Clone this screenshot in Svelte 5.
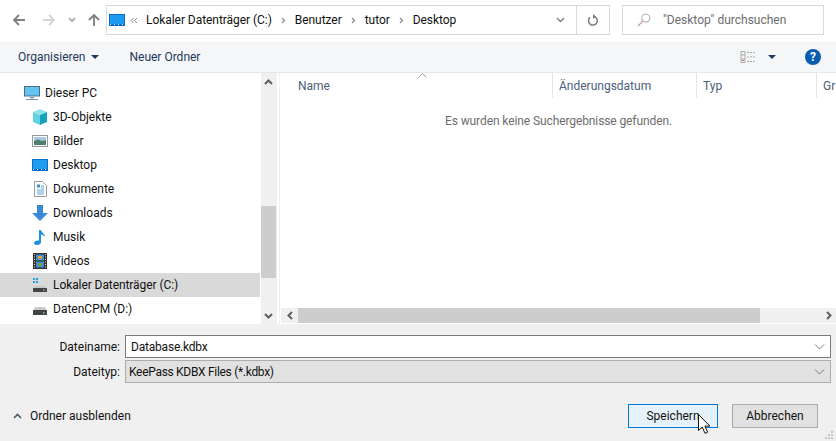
<script lang="ts">
	// Save-as dialog body: nav bar, command bar, tree + list, file fields, buttons.
	const tree = [
		{ label: 'Dieser PC', icon: 'pc', top: true },
		{ label: '3D-Objekte', icon: 'cube' },
		{ label: 'Bilder', icon: 'pics' },
		{ label: 'Desktop', icon: 'desk' },
		{ label: 'Dokumente', icon: 'docs' },
		{ label: 'Downloads', icon: 'down' },
		{ label: 'Musik', icon: 'music' },
		{ label: 'Videos', icon: 'video' },
		{ label: 'Lokaler Datenträger (C:)', icon: 'sys', selected: true },
		{ label: 'DatenCPM (D:)', icon: 'disk' }
	];
	const crumbs = ['Lokaler Datenträger (C:)', 'Benutzer', 'tutor', 'Desktop'];
	const columns = [
		{ label: 'Name', width: 255 },
		{ label: 'Änderungsdatum', width: 144 },
		{ label: 'Typ', width: 120 },
		{ label: 'Gr', width: 20 }
	];
</script>

<div class="dialog">
	<nav class="navbar">
		<button class="nav-btn back" aria-label="Zurück">
			<svg width="14" height="14" viewBox="0 0 14 14"><path d="M13 7H2M7 2 2 7l5 5" fill="none" stroke="#7f7f7f" stroke-width="1.8" /></svg>
		</button>
		<button class="nav-btn fwd" aria-label="Vor">
			<svg width="14" height="14" viewBox="0 0 14 14"><path d="M1 7h11M7 2l5 5-5 5" fill="none" stroke="#d4d4d4" stroke-width="1.8" /></svg>
		</button>
		<button class="nav-small" aria-label="Verlauf">
			<svg width="8" height="6" viewBox="0 0 8 6"><path d="M1 1l3 3 3-3" fill="none" stroke="#a3a3a3" stroke-width="1.6" /></svg>
		</button>
		<button class="nav-btn up" aria-label="Nach oben">
			<svg width="14" height="14" viewBox="0 0 14 14"><path d="M7 13V2M2 7l5-5 5 5" fill="none" stroke="#7f7f7f" stroke-width="1.8" /></svg>
		</button>
		<div class="address">
			<svg class="addr-icon" width="16" height="12" viewBox="0 0 16 12">
				<rect width="16" height="12" fill="#0a6fc9" />
				<rect x="1" y="1" width="14" height="9" fill="#1e9bf0" />
				<path d="M1 10.5h14" stroke="#cfe8fb" stroke-dasharray="1 3" />
			</svg>
			<span class="overflow">
				<svg width="8" height="7" viewBox="0 0 8 7"><path d="M3.5 1 1 3.500 3.5 6M7 1 4.500 3.500 7 6" fill="none" stroke="#8d8d8d" /></svg>
			</span>
			{#each crumbs as crumb, i}
				{#if i > 0}
					<svg class="sep" width="5" height="7" viewBox="0 0 5 7"><path d="M1 1l2.500 2.500L1 6" fill="none" stroke="#8d8d8d" stroke-width="1.3" /></svg>
				{/if}
				<span class="crumb">{crumb}</span>
			{/each}
			<span class="spacer"></span>
			<span class="addr-drop">
				<svg width="9" height="6" viewBox="0 0 9 6"><path d="M1 1l3.500 3.500L8 1" fill="none" stroke="#7a7a7a" stroke-width="1.3" /></svg>
			</span>
			<span class="addr-refresh">
				<svg width="12" height="13" viewBox="0 0 12 13"><path d="M7.500 2.600A4.400 4.400 0 1 1 3 3.400" fill="none" stroke="#7a7a7a" stroke-width="1.5" /><path d="M6 0v5l3-2.500z" fill="#7a7a7a" /></svg>
			</span>
		</div>
		<div class="search">
			<svg width="14" height="14" viewBox="0 0 14 14"><circle cx="8.800" cy="5.200" r="4" fill="none" stroke="#a8a8a8" /><path d="M5.800 8.200 1 13" stroke="#c49a8c" stroke-width="1.2" /></svg>
			<span>"Desktop" durchsuchen</span>
		</div>
	</nav>

	<div class="commandbar">
		<span class="cmd organise">Organisieren<i class="caret"></i></span>
		<span class="cmd">Neuer Ordner</span>
		<span class="spacer"></span>
		<svg class="views" width="17" height="12" viewBox="0 0 17 12">
			<path d="M1 .5h4v11H1zM1 4h4M1 8h4" fill="none" stroke="#a8a8a8" />
			<path d="M7 1.500h9M7 6h9M7 10.500h9" stroke="#a8a8a8" stroke-dasharray="2 1" />
			<path d="M2 9.500h2" stroke="#d66" />
		</svg>
		<i class="caret views-caret"></i>
		<span class="help">?</span>
	</div>

	<div class="panes">
		<aside class="tree">
			<ul>
				{#each tree as item}
					<li class:selected={item.selected} class:top={item.top}>
						<span class="tree-icon">
							{#if item.icon === 'pc'}
								<svg width="16" height="16" viewBox="0 0 16 16"><rect x="0" y="1" width="16" height="10.500" fill="#4f6e86" /><rect x="1" y="2" width="14" height="8.500" fill="#63c3f2" /><path d="M6 12h4v1.500H6z" fill="#8aa0ae" /><path d="M2 14.500h12" stroke="#7d94a3" /></svg>
							{:else if item.icon === 'cube'}
								<svg width="16" height="16" viewBox="0 0 16 16"><path d="M8 0l7 3-7 3-7-3z" fill="#8fe3ec" /><path d="M1 3l7 3v10l-7-3z" fill="#62d3e3" /><path d="M15 3 8 6v10l7-3z" fill="#14a5bd" /></svg>
							{:else if item.icon === 'pics'}
								<svg width="16" height="14" viewBox="0 0 16 14"><rect x=".5" y="1.500" width="15" height="11" fill="#fff" stroke="#9a9a9a" /><rect x="2" y="3" width="12" height="4" fill="#a9c9de" /><path d="M2 7l4-1.500L10 7l4-1v5H2z" fill="#4f7f6f" /></svg>
							{:else if item.icon === 'desk'}
								<svg width="16" height="12" viewBox="0 0 16 12"><rect width="16" height="12" fill="#0a6fc9" /><rect x="1" y="1" width="14" height="9" fill="#1e9bf0" /><path d="M1 10.500h14" stroke="#cfe8fb" stroke-dasharray="1 3" /></svg>
							{:else if item.icon === 'docs'}
								<svg width="13" height="16" viewBox="0 0 13 16"><path d="M.5.500h8l4 4v11H.5z" fill="#fff" stroke="#9a9a9a" /><path d="M3 3.500h3v3H3z" fill="#3f8dcf" /><path d="M7 5h3M7 7h3M3 9h7M3 11h7M3 13h7" stroke="#5ea3d3" /></svg>
							{:else if item.icon === 'down'}
								<svg width="16" height="16" viewBox="0 0 16 16"><path d="M5 0h6v8h5l-8 8-8-8h5z" fill="#3b87d8" /></svg>
							{:else if item.icon === 'music'}
								<svg width="12" height="16" viewBox="0 0 12 16"><path d="M5 1h2c.4 3 4 3.500 4 7-1-1.500-2.500-2.500-4-2.500V13c0 2-2 3-4 3s-3-1-3-2c0-1.500 2-3 5-2.500z" fill="#1f8fe0" /></svg>
							{:else if item.icon === 'video'}
								<svg width="14" height="16" viewBox="0 0 14 16"><rect width="14" height="16" fill="#333" /><rect x="3" y="1.500" width="8" height="6" fill="#3f8dcf" /><rect x="3" y="8.500" width="8" height="6" fill="#3f8dcf" /><rect x="5" y="3" width="4" height="3" fill="#d9a437" /><rect x="5" y="10" width="4" height="3" fill="#7aa34a" /><path d="M1.500 1v14M12.500 1v14" stroke="#ddd" stroke-dasharray="1 1.500" /></svg>
							{:else if item.icon === 'sys'}
								<svg width="16" height="16" viewBox="0 0 16 16"><path d="M1 1h2v2H1zM4 1h2v2H4zM1 4h2v2H1zM4 4h2v2H4z" fill="#1fa3e8" /><path d="M2 11l1-2h10l1 2z" fill="#c8c8c8" /><rect x="1" y="11" width="14" height="4" rx=".5" fill="#444" /><rect x="11" y="12.500" width="1.500" height="1.500" fill="#5fd35f" /></svg>
							{:else}
								<svg width="16" height="16" viewBox="0 0 16 16"><path d="M2 9l1-3h10l1 3z" fill="#c8c8c8" /><rect x="1" y="9" width="14" height="5" rx=".5" fill="#444" /><rect x="11" y="11" width="1.500" height="1.500" fill="#5fd35f" /></svg>
							{/if}
						</span>
						<span class="tree-label">{item.label}</span>
					</li>
				{/each}
			</ul>
		</aside>
		<div class="vscroll">
			<button class="arrow" aria-label="Hoch"><svg width="9" height="6" viewBox="0 0 9 6"><path d="M1 5l3.500-3.500L8 5" fill="none" stroke="#606060" stroke-width="2" /></svg></button>
			<div class="v-track"><div class="v-thumb"></div></div>
			<button class="arrow" aria-label="Runter"><svg width="9" height="6" viewBox="0 0 9 6"><path d="M1 1l3.500 3.500L8 1" fill="none" stroke="#606060" stroke-width="2" /></svg></button>
		</div>
		<section class="list">
			<div class="list-head">
				{#each columns as col}
					<span class="col" style={`width: ${col.width}px`}>{col.label}</span>
				{/each}
				<svg class="sort" width="9" height="5" viewBox="0 0 9 5"><path d="M.5 4.500l4-4 4 4" fill="none" stroke="#9a9a9a" /></svg>
			</div>
			<p class="empty">Es wurden keine Suchergebnisse gefunden.</p>
			<div class="hscroll">
				<button class="arrow h" aria-label="Links"><svg width="6" height="9" viewBox="0 0 6 9"><path d="M5 1 1.500 4.500 5 8" fill="none" stroke="#606060" stroke-width="2" /></svg></button>
				<div class="h-track"><div class="h-thumb"></div></div>
				<button class="arrow h" aria-label="Rechts"><svg width="6" height="9" viewBox="0 0 6 9"><path d="M1 1l3.500 3.500L1 8" fill="none" stroke="#606060" stroke-width="2" /></svg></button>
			</div>
		</section>
	</div>

	<footer class="footer">
		<div class="fields">
			<span class="field-label">Dateiname:</span>
			<div class="field name">
				<span class="tight">Database.kdbx</span>
				<svg width="11" height="6" viewBox="0 0 11 6"><path d="M1 .5l4.500 4.500L10 .5" fill="none" stroke="#7a7a7a" /></svg>
			</div>
			<span class="field-label">Dateityp:</span>
			<div class="field type">
				<span class="tighter">KeePass KDBX Files (*.kdbx)</span>
				<svg width="11" height="6" viewBox="0 0 11 6"><path d="M1 .5l4.500 4.500L10 .5" fill="none" stroke="#7a7a7a" /></svg>
			</div>
		</div>
		<div class="actions">
			<span class="toggle">
				<svg width="9" height="6" viewBox="0 0 9 6"><path d="M1 5l3.500-3.500L8 5" fill="none" stroke="#555" stroke-width="1.6" /></svg>
				Ordner ausblenden
			</span>
			<span class="spacer"></span>
			<button class="btn primary">Speichern</button>
			<button class="btn">Abbrechen</button>
		</div>
		<svg class="cursor" width="14" height="22" viewBox="0 0 14 22"><path d="M.5.500v16l3.800-3.400 2.700 6.200 2.600-1.100-2.700-6.100h5z" fill="#fff" stroke="#111" /></svg>
		<svg class="grip" width="9" height="9" viewBox="0 0 9 9"><path d="M7 1h2v2H7zM4 4h2v2H4zM7 4h2v2H7zM1 7h2v2H1zM4 7h2v2H4zM7 7h2v2H7z" fill="#c4c4c4" /></svg>
	</footer>
</div>

<style>
	:global(body) {
		margin: 0;
		background: #fff;
	}

	.dialog {
		display: flex;
		flex-direction: column;
		width: 836px;
		height: 441px;
		overflow: hidden;
		color: #111;
		font-family: Roboto, 'Noto Sans', sans-serif;
		font-size: 12px;
		line-height: 16px;
	}

	button {
		display: flex;
		align-items: center;
		justify-content: center;
		margin: 0;
		padding: 0;
		border: 0;
		background: none;
		font: inherit;
		color: inherit;
	}

	.spacer {
		flex: 1;
	}

	.navbar {
		display: flex;
		flex: none;
		align-items: flex-start;
		height: 42px;
		padding: 5px 0 0 12px;
		box-sizing: border-box;
	}

	.nav-btn {
		flex: none;
		width: 14px;
		height: 30px;
	}

	.nav-btn.fwd {
		margin-left: 16px;
	}

	.nav-small {
		flex: none;
		width: 8px;
		height: 30px;
		margin-left: 12px;
	}

	.nav-btn.up {
		margin-left: 11px;
	}

	.address {
		display: flex;
		align-items: center;
		flex: none;
		width: 504px;
		height: 30px;
		margin-left: 5px;
		box-sizing: border-box;
		border: 1px solid #d9d9d9;
		padding-left: 2px;
	}

	.addr-icon {
		flex: none;
		margin-right: 5px;
	}

	.overflow {
		display: flex;
		align-items: center;
		flex: none;
		width: 16px;
	}

	.crumb {
		letter-spacing: -0.05px;
		white-space: nowrap;
	}

	.sep {
		flex: none;
		margin: 0 9px;
	}

	.addr-drop,
	.addr-refresh {
		display: flex;
		align-items: center;
		justify-content: center;
		height: 28px;
	}

	.addr-drop {
		margin-right: 11px;
	}

	.addr-refresh {
		width: 32px;
		border-left: 1px solid #d9d9d9;
	}

	.search {
		display: flex;
		align-items: center;
		gap: 12px;
		flex: none;
		width: 202px;
		height: 30px;
		margin-left: 12px;
		padding-left: 14px;
		box-sizing: border-box;
		border: 1px solid #d9d9d9;
		color: #6d6d6d;
	}

	.commandbar {
		display: flex;
		flex: none;
		align-items: center;
		height: 31px;
		padding: 0 15px 1px 18px;
		box-sizing: border-box;
		border-bottom: 1px solid #e6e7e8;
		background: #f5f6f7;
		color: #1e395b;
	}

	.cmd {
		display: flex;
		align-items: center;
	}

	.organise {
		margin-right: 30px;
	}

	.caret {
		display: inline-block;
		width: 0;
		height: 0;
		margin-left: 6px;
		border-top: 4px solid #1e395b;
		border-left: 4px solid transparent;
		border-right: 4px solid transparent;
	}

	.views {
		margin-right: 11px;
	}

	.views-caret {
		margin: 0 29px 0 0;
	}

	.help {
		display: flex;
		align-items: center;
		justify-content: center;
		width: 16px;
		height: 16px;
		border-radius: 50%;
		background: #0a5cb0;
		color: #fff;
		font-weight: 700;
		font-size: 12px;
	}

	.panes {
		display: flex;
		flex: none;
		height: 251px;
	}

	.tree {
		width: 260px;
		flex: none;
		overflow: hidden;
	}

	ul {
		margin: 0;
		padding: 7px 0 0;
		list-style: none;
	}

	li {
		display: flex;
		align-items: center;
		height: 24px;
		padding-left: 32px;
	}

	li.top {
		padding-left: 24px;
		height: 25px;
	}

	li.selected {
		background: #d9d9d9;
	}

	li.selected .tree-label {
		letter-spacing: -0.08px;
	}

	.tree-icon {
		display: flex;
		align-items: center;
		justify-content: center;
		flex: none;
		width: 16px;
		height: 16px;
	}

	.tree-label {
		margin-left: 5px;
		white-space: nowrap;
	}

	.vscroll {
		display: flex;
		flex: none;
		flex-direction: column;
		width: 16px;
		margin-left: 1px;
		background: #f0f0f0;
	}

	.arrow {
		flex: none;
		width: 15px;
		height: 17px;
	}

	.v-track {
		flex: 1;
		padding-top: 116px;
	}

	.v-thumb {
		width: 15px;
		height: 72px;
		background: #cdcdcd;
	}

	.list {
		display: flex;
		flex: 1;
		flex-direction: column;
		position: relative;
		margin-left: 2px;
		border-left: 1px solid #f0f0f0;
	}

	.list-head {
		display: flex;
		height: 25px;
		padding-left: 18px;
		color: #4c607a;
	}

	.col {
		display: flex;
		flex: none;
		align-items: center;
		box-sizing: border-box;
		border-right: 1px solid #e5e5e5;
	}

	.col + .col {
		padding-left: 6px;
	}

	.col:last-of-type {
		border: 0;
	}

	.sort {
		position: absolute;
		top: 0;
		left: 138px;
	}

	.empty {
		flex: 1;
		margin: 15px 0 0;
		letter-spacing: -0.1px;
		text-align: center;
		color: #6d6d6d;
	}

	.hscroll {
		display: flex;
		align-items: stretch;
		flex: none;
		height: 15px;
		margin: 0 0 1px 1px;
		background: #f0f0f0;
	}

	.arrow.h {
		width: 17px;
		height: 15px;
	}

	.h-track {
		flex: 1;
	}

	.h-thumb {
		width: 462px;
		height: 15px;
		background: #cdcdcd;
	}

	.footer {
		position: relative;
		flex: 1;
		background: #f0f0f0;
	}

	.fields {
		display: grid;
		grid-template-columns: 120px 706px;
		grid-template-rows: 23px 23px;
		row-gap: 2px;
		column-gap: 5px;
		padding-top: 11px;
	}

	.field-label {
		display: flex;
		align-items: center;
		justify-content: flex-end;
	}

	.field {
		display: flex;
		align-items: center;
		justify-content: space-between;
		padding: 0 5px;
		box-sizing: border-box;
	}

	.field.name {
		border: 1px solid #7a7a7a;
		background: #fff;
	}

	.field.type {
		padding-left: 3px;
		border: 1px solid #adadad;
		background: #e1e1e1;
	}

	.tight {
		letter-spacing: -0.2px;
	}

	.tighter {
		letter-spacing: -0.3px;
	}

	.actions {
		display: flex;
		align-items: center;
		margin-top: 21px;
		padding: 0 18px 0 13px;
		height: 24px;
	}

	.toggle {
		display: flex;
		align-items: center;
		gap: 8px;
	}

	.btn {
		box-sizing: border-box;
		height: 24px;
		width: 86px;
		border: 1px solid #adadad;
		background: #e1e1e1;
	}

	.btn.primary {
		width: 90px;
		margin-right: 14px;
		border-color: #0078d7;
		background: #e5f1fb;
	}

	.cursor {
		position: absolute;
		left: 698px;
		top: 90px;
	}

	.grip {
		position: absolute;
		right: 3px;
		bottom: 2px;
	}
</style>
